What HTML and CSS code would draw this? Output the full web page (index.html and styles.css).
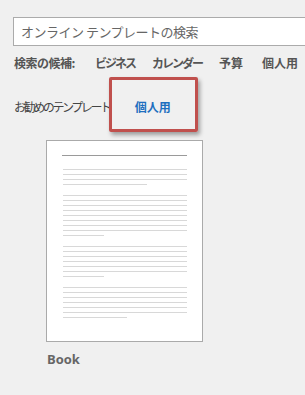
FILE: index.html
```html
<!DOCTYPE html>
<html lang="ja">
<head>
  <meta charset="UTF-8">
  <title>新規</title>
  <link rel="stylesheet" href="styles.css">
</head>
<body>

  <!-- Search -->
  <div class="search">オンライン テンプレートの検索</div>

  <!-- Suggested searches -->
  <div class="suggest">
    <span class="suggest-label">検索の候補:</span>
    <a href="#" class="kana">ビジネス</a>
    <a href="#" class="kana">カレンダー</a>
    <a href="#">予算</a>
    <a href="#">個人用</a>
  </div>

  <!-- Tabs -->
  <div class="tabs">
    <span class="tab">お勧めのテンプレート</span>
    <span class="tab active">個人用<span class="highlight"></span></span>
  </div>

  <!-- Template -->
  <div class="template">
    <div class="thumb">
      <div class="rule"></div>
      <div class="para">
        <i></i><i></i><i></i><i class="short mid"></i>
      </div>
      <div class="para">
        <i></i><i></i><i></i><i></i><i></i><i></i><i></i><i></i><i class="short"></i>
      </div>
      <div class="para">
        <i></i><i></i><i></i><i></i><i></i><i></i><i class="short"></i>
      </div>
      <div class="para">
        <i></i><i></i><i></i><i></i><i></i><i></i><i class="short half"></i>
      </div>
    </div>
    <div class="template-name">Book</div>
  </div>

</body>
</html>
```

FILE: styles.css
```css
* {
  margin: 0;
  padding: 0;
  box-sizing: border-box;
}

body {
  background-color: #f0f0f0;
  font-family: "Noto Sans CJK JP", "Noto Sans", sans-serif;
  color: #444;
  overflow: hidden;
}

/* Search box */
.search {
  margin: 17px -10px 0 13px;
  height: 29px;
  padding-left: 7px;
  background-color: #fff;
  border: 1px solid #ababab;
  font-size: 13px;
  line-height: 27px;
  color: #666;
  letter-spacing: -0.5px;
}

/* Suggested searches */
.suggest {
  display: flex;
  align-items: center;
  gap: 17px;
  margin: 8px 0 0 14px;
  font-size: 12px;
  font-weight: bold;
  line-height: 18px;
  white-space: nowrap;
}

.suggest-label {
  color: #555;
  width: 64px;
  letter-spacing: -0.5px;
}

.suggest a {
  color: #555;
  text-decoration: none;
}

.suggest a.kana {
  letter-spacing: -2px;
}

.suggest a:last-child {
  margin-left: 2px;
}

/* Tabs */
.tabs {
  display: flex;
  align-items: center;
  margin: 26px 0 0 14px;
  font-size: 12px;
  line-height: 18px;
}

.tab {
  color: #444;
  letter-spacing: -2.4px;
}

.tab.active {
  position: relative;
  margin-left: 25px;
  color: #1e6fbf;
  font-weight: bold;
  letter-spacing: 0;
}

/* Annotation frame around the active tab */
.highlight {
  position: absolute;
  left: -26px;
  top: -21px;
  width: 89px;
  height: 55px;
  border: 3px solid #c0504d;
  border-radius: 2px;
  box-shadow: 2px 3px 4px rgba(0, 0, 0, 0.35);
}

/* Template card */
.template {
  margin: 24px 0 0 46px;
}

.thumb {
  width: 157px;
  height: 202px;
  background-color: #fff;
  border: 1px solid #aaa;
  padding: 14px 15px 0 15px;
}

.rule {
  height: 1px;
  background-color: #9a9a9a;
  margin-bottom: 13px;
}

.para {
  display: flex;
  flex-direction: column;
  gap: 4px;
  margin-bottom: 10px;
}

.para i {
  display: block;
  height: 1px;
  margin-left: 1px;
  background-color: #d8d8d8;
}

.para i.short {
  width: 41px;
}

.para i.mid {
  width: 84px;
}

.para i.half {
  width: 64px;
}

.template-name {
  margin-top: 8px;
  margin-left: 1px;
  font-family: "Open Sans", "Liberation Sans", sans-serif;
  font-size: 13px;
  font-weight: bold;
  color: #666;
}
```
